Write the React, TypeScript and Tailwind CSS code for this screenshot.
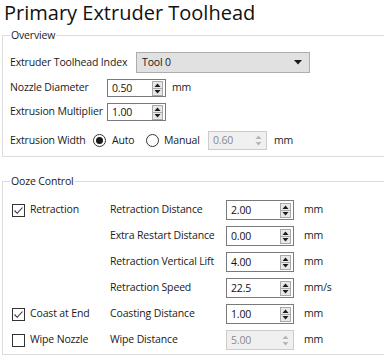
import React from 'react'

const font = { fontFamily: '"Open Sans", "Noto Sans", sans-serif' }

function SpinArrows({ disabled }: { disabled?: boolean }) {
  const arrow = disabled ? '#b5b5b5' : '#1a1a1a'
  return (
    <div
      className={
        'flex flex-col w-[11px] h-[15px] ' +
        (disabled ? 'border border-transparent' : 'border border-[#a9a9a9] bg-[#e8e8e8]')
      }
    >
      <div className="flex-1 flex items-center justify-center">
        <svg width="7" height="4" viewBox="0 0 7 4">
          <path d="M0.5 4 L3.5 0.5 L6.5 4 Z" fill={arrow} />
        </svg>
      </div>
      <div className={'h-px ' + (disabled ? 'bg-transparent' : 'bg-[#a9a9a9]')} />
      <div className="flex-1 flex items-center justify-center">
        <svg width="7" height="4" viewBox="0 0 7 4">
          <path d="M0.5 0 L3.5 3.5 L6.5 0 Z" fill={arrow} />
        </svg>
      </div>
    </div>
  )
}

function SpinBox({
  value,
  width,
  height = 'h-[19px]',
  disabled,
}: {
  value: string
  width: string
  height?: string
  disabled?: boolean
}) {
  return (
    <div
      className={
        `${width} ${height} shrink-0 flex items-center justify-between pl-[4px] pr-[2px] border ` +
        (disabled ? 'border-[#cccccc] bg-[#f0f0f0] text-[#8a8a8a]' : 'border-[#7a7a7a] bg-white text-[#111]')
      }
    >
      <span className="leading-none">{value}</span>
      <SpinArrows disabled={disabled} />
    </div>
  )
}

function Radio({ checked }: { checked?: boolean }) {
  return (
    <div className="w-[13px] h-[13px] shrink-0 rounded-full border border-[#333] bg-white flex items-center justify-center">
      {checked && <div className="w-[7px] h-[7px] rounded-full bg-[#1a1a1a]" />}
    </div>
  )
}

function Check({ checked }: { checked?: boolean }) {
  return (
    <div className="w-[13px] h-[13px] shrink-0 border border-[#333] bg-white flex items-center justify-center">
      {checked && (
        <svg width="11" height="11" viewBox="0 0 11 11">
          <path d="M1.5 5.5 L4.2 8.3 L9.5 2.5" fill="none" stroke="#333" strokeWidth="1.1" />
        </svg>
      )}
    </div>
  )
}

function OozeRow({
  check,
  label,
  value,
  unit,
  disabled,
}: {
  check?: React.ReactNode
  label: string
  value: string
  unit: string
  disabled?: boolean
}) {
  return (
    <div className="flex items-center h-[20px]">
      <div className="w-[107px] pl-[9px]">{check}</div>
      <div className="w-[116px]">{label}</div>
      <SpinBox value={value} width="w-[68px]" height="h-[20px]" disabled={disabled} />
      <div className="ml-[10px]">{unit}</div>
    </div>
  )
}

export default function App() {
  return (
    <div
      className="w-[384px] h-[362px] bg-white overflow-hidden text-[10.5px] tracking-[-0.15px] text-[#1a1a1a] whitespace-nowrap"
      style={font}
    >
      <h1 className="text-[20px] tracking-normal leading-none pl-[4px] pt-[3px] h-[29px] text-[#111]">
        Primary Extruder Toolhead
      </h1>

      {/* Overview group */}
      <fieldset className="ml-[2px] w-[392px] h-[128px] border border-[#dcdcdc] px-[7px]">
        <legend className="px-[1px] leading-[12px] h-[13px]">Overview</legend>
        <div className="flex flex-col pt-[10px]">
          <div className="flex items-center h-[21px]">
            <div className="w-[126px]">Extruder Toolhead Index</div>
            <div className="w-[174px] h-[21px] bg-[#e1e1e1] border border-[#adadad] flex items-center justify-between pl-[5px] pr-[7px]">
              <span>Tool 0</span>
              <svg width="8" height="5" viewBox="0 0 8 5">
                <path d="M0 0 L8 0 L4 4.5 Z" fill="#1a1a1a" />
              </svg>
            </div>
          </div>
          <div className="flex items-center h-[18px] mt-[6px]">
            <div className="w-[97px]">Nozzle Diameter</div>
            <SpinBox value="0.50" width="w-[59px]" height="h-[18px]" />
            <div className="ml-[6px]">mm</div>
          </div>
          <div className="flex items-center h-[18px] mt-[6px]">
            <div className="w-[97px]">Extrusion Multiplier</div>
            <SpinBox value="1.00" width="w-[59px]" height="h-[18px]" />
          </div>
          <div className="flex items-center h-[19px] mt-[10px]">
            <div className="w-[83px]">Extrusion Width</div>
            <Radio checked />
            <div className="ml-[6px] w-[34px]">Auto</div>
            <Radio />
            <div className="ml-[5px] w-[44px]">Manual</div>
            <SpinBox value="0.60" width="w-[59px]" height="h-[19px]" disabled />
            <div className="ml-[7px]">mm</div>
          </div>
        </div>
      </fieldset>

      {/* Ooze Control group */}
      <fieldset className="ml-[2px] mt-[18px] w-[392px] h-[180px] border border-[#dcdcdc] px-0">
        <legend className="ml-[7px] px-[1px] leading-[12px] h-[13px]">Ooze Control</legend>
        <div className="flex flex-col gap-[6px] pt-[12px]">
          <OozeRow
            check={
              <div className="flex items-center gap-[5px]">
                <Check checked />
                <span>Retraction</span>
              </div>
            }
            label="Retraction Distance"
            value="2.00"
            unit="mm"
          />
          <OozeRow label="Extra Restart Distance" value="0.00" unit="mm" />
          <OozeRow label="Retraction Vertical Lift" value="4.00" unit="mm" />
          <OozeRow label="Retraction Speed" value="22.5" unit="mm/s" />
          <OozeRow
            check={
              <div className="flex items-center gap-[5px]">
                <Check checked />
                <span>Coast at End</span>
              </div>
            }
            label="Coasting Distance"
            value="1.00"
            unit="mm"
          />
          <OozeRow
            check={
              <div className="flex items-center gap-[5px]">
                <Check />
                <span>Wipe Nozzle</span>
              </div>
            }
            label="Wipe Distance"
            value="5.00"
            unit="mm"
            disabled
          />
        </div>
      </fieldset>
    </div>
  )
}
